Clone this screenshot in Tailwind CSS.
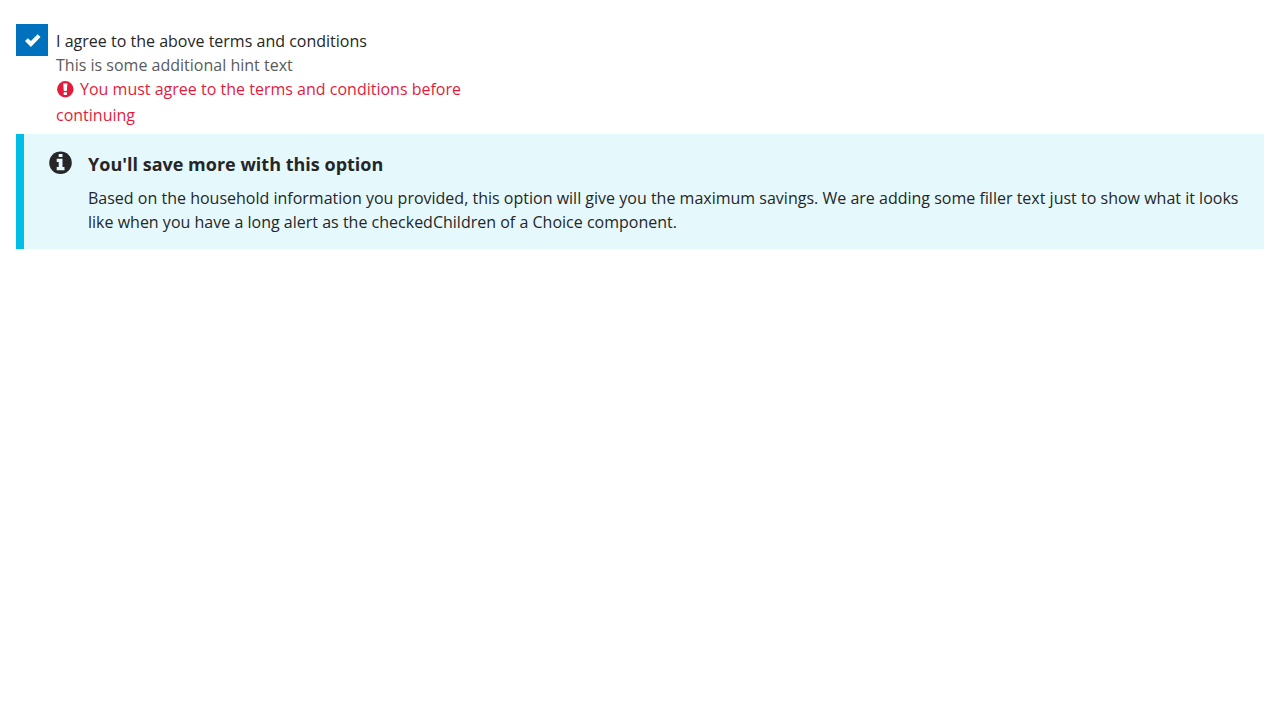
<!DOCTYPE html>
<html lang="en">
<head>
<meta charset="utf-8">
<title>Choice</title>
<script src="https://cdn.jsdelivr.net/npm/@tailwindcss/browser@4"></script>
</head>
<body class="bg-white px-4 pt-6 font-['Open_Sans',sans-serif] text-base leading-6 text-[#262626] antialiased [word-spacing:0.04px]">
<div class="flex h-[110px] gap-2">
  <div class="size-8 shrink-0 bg-[#0071bc] pt-2.5 pl-[9px]">
    <svg class="h-[13px] w-[15.500px]" viewBox="0 0 15.5 13" fill="#fff"><path d="M12.700.2 15.500 3 5.900 12.900 0 7.100 2.900 4.200 5.900 7.100z"/></svg>
  </div>
  <div class="w-[420px] pt-[5px]">
    <div>I agree to the above terms and conditions</div>
    <div class="text-[#5a5a5a]">This is some additional hint text</div>
    <div class="-mt-px leading-[26px] text-[#e31c3d]"><svg class="mr-1.5 ml-px inline-block size-[17px] align-[-3px]" viewBox="0 0 17 17"><circle cx="8.300" cy="8.200" r="8.200" fill="currentColor"/><path fill="#fff" d="M6.200 2.500h4.200l-.6 7.400h-3zM6.700 11.300h3.200v2.700H6.700z"/></svg>You must agree to the terms and conditions before continuing</div>
  </div>
</div>
<div class="flex h-[115px] border-l-8 border-[#00bfe7] bg-[#e5f9fd] pt-4 pl-[25px]">
  <svg class="mt-[1px] mr-4 size-[23px] shrink-0" viewBox="0 0 23 23"><circle cx="11.500" cy="11.700" r="11.300" fill="currentColor"/><path fill="#e5f9fd" d="M9.700 3h3.800v3H9.700zM7.700 7.800h5.800v8.200h2v3.200H7.700V16h2v-5h-2z"/></svg>
  <div class="pr-4">
    <h3 class="mb-2 text-lg leading-7 font-bold">You'll save more with this option</h3>
    <p>Based on the household information you provided, this option will give you the maximum savings. We are adding some filler text just to show what it looks like when you have a long alert as the checkedChildren of a Choice component.</p>
  </div>
</div>
</body>
</html>
